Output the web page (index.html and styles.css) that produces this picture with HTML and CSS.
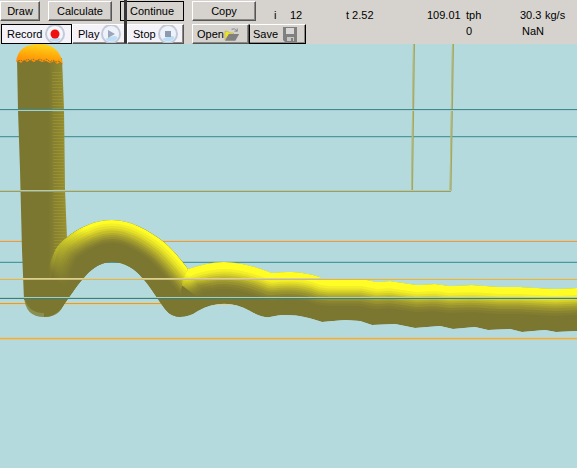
FILE: index.html
```html
<!DOCTYPE html>
<html lang="en">
<head>
<meta charset="utf-8">
<title>Trajectory</title>
<link rel="stylesheet" href="styles.css">
</head>
<body>
<header class="toolbar">
  <div class="row row-main">
    <button class="btn draw">Draw</button>
    <button class="btn">Calculate</button>
    <button class="btn focused">Continue</button>
    <button class="btn">Copy</button>
    <div class="readout readout-main">
      <span>i</span><span>12</span><span>t 2.52</span><span>109.01</span><span>tph</span><span>30.3</span><span>kg/s</span>
    </div>
  </div>
  <div class="row row-media">
    <button class="btn media selected">Record
      <svg class="round" viewBox="0 0 22 18"><circle cx="11" cy="9" r="10" fill="#c3c9d6"/><circle cx="11" cy="9" r="8" fill="#f4f6fc"/><path d="M5 14Q11 19 17 14Q15 11 5 14" fill="#b9def5"/><circle cx="11" cy="9" r="4.500" fill="#f01010"/></svg>
    </button>
    <button class="btn media play">Play
      <svg class="round" viewBox="0 0 22 18"><circle cx="11" cy="9" r="10" fill="#c3c9d6"/><circle cx="11" cy="9" r="8" fill="#eef3fb"/><path d="M5 14Q11 19 17 14Q19 8 5 14" fill="#b9def5"/><path d="M8 5L15 9L8 13Z" fill="#9ba6ba"/></svg>
    </button>
    <button class="btn media stop">Stop
      <svg class="round" viewBox="0 0 22 18"><circle cx="11" cy="9" r="10" fill="#c3c9d6"/><circle cx="11" cy="9" r="8" fill="#eef3fb"/><path d="M5 14Q11 19 17 14Q19 8 5 14" fill="#b9def5"/><rect x="8" y="6" width="6" height="6" fill="#8e9ab0"/></svg>
    </button>
    <button class="btn file open">Open
      <svg class="folder" viewBox="0 0 17 15"><path d="M1 13V4H4L6 6H10V8H5L1 13" fill="#f2e420" stroke="#a6a04a" stroke-width=".5"/><path d="M1 14L5 7H16L12 14Z" fill="#808080"/><path d="M8 2Q11 0 14 4M14 1V4H11" fill="none" stroke="#858585"/></svg>
    </button>
    <button class="btn file save">Save
      <svg class="disk" viewBox="0 0 14 15"><path d="M0 0H14V15H2L0 13Z" fill="#808080"/><path d="M3 1H11V7H3Z" fill="#dad8d6"/><path d="M4 10H11V14H4Z" fill="#c8c6c4"/><path d="M8 11H10V14H8Z" fill="#808080"/></svg>
    </button>
    <div class="readout readout-sub"><span>0</span><span>NaN</span></div>
  </div>
  <div class="cursor-bar"></div>
</header>
<main>
<svg class="plot" viewBox="0 44 577 424" role="img" aria-label="Particle trajectory">
  <defs>
    <linearGradient id="column" x1="0" x2="1" y1="0" y2="0">
      <stop offset="0" stop-color="#7b7730"/><stop offset=".62" stop-color="#7b7730"/><stop offset="1" stop-color="#989032"/>
    </linearGradient>
    <linearGradient id="cap" x1="0" x2=".25" y1="1" y2="0">
      <stop offset="0" stop-color="#ff7a08"/><stop offset=".5" stop-color="#ffa508"/><stop offset="1" stop-color="#ffd018"/>
    </linearGradient>
    <linearGradient id="fadeIn" gradientUnits="userSpaceOnUse" x1="44" y1="262" x2="88" y2="232">
      <stop offset="0" stop-color="#000"/><stop offset=".35" stop-color="#666"/><stop offset="1" stop-color="#fff"/>
    </linearGradient>
    <mask id="archFade" maskUnits="userSpaceOnUse" x="0" y="200" width="220" height="130"><rect y="200" width="220" height="130" fill="url(#fadeIn)"/></mask>
    <pattern id="ribs" width="4" height="3" patternUnits="userSpaceOnUse"><rect width="4" height="1" fill="#aaa030" opacity=".45"/></pattern>
    <path id="arch1" d="M44 290C50 261 54 246 66 238C80 227 95 220 112 220C130 220 149 230 165 243C175 252 182 261 190 270L200 282"/>
    <path id="tail" d="M178 282L188 269C200 265 212 262 224 262C240 262 257 267 272 273C289 271 307 272 322 278L330 279H362L377 282L390 281L417 285L435 284L450 286L472 285L500 287H520L555 289L577 288H620"/>
    <clipPath id="archClip"><path d="M44 300C47 264 54 246 66 238C80 227 95 220 112 220C130 220 149 230 165 243C175 252 182 261 188 269L183 285L181 317Q171 317 165 309C151 290 138 262 112 262C91 262 79 284 65 303Q57 317 44 317Z"/></clipPath>
    <clipPath id="tailClip"><path id="tailBody" d="M179 317L181 290Q183 276 188 269C200 265 212 262 224 262C240 262 257 267 272 273C289 271 307 272 322 278L330 279H362L377 282L390 281L417 285L435 284L450 286L472 285L500 287H520L555 289L577 288V331L556 332L545 330L522 332L510 329L488 330L475 327L453 329L440 326L415 328L395 324L372 325L360 321L345 320L322 322C308 317 288 312 270 317Q262 318 250 311C232 301 215 302 198 311Q190 317 179 317Z"/></clipPath>
    <linearGradient id="tailFadeIn" gradientUnits="userSpaceOnUse" x1="184" y1="297" x2="192" y2="276">
      <stop offset="0" stop-color="#000"/><stop offset="1" stop-color="#fff"/>
    </linearGradient>
    <mask id="tailFade" maskUnits="userSpaceOnUse" x="170" y="250" width="410" height="90"><rect x="210" y="250" width="370" height="90" fill="#fff"/><rect x="170" y="250" width="41" height="90" fill="url(#tailFadeIn)"/></mask>
  </defs>
  <rect y="44" width="577" height="424" fill="#b4dadd"/>
  <g fill="none">
    <path d="M0 136.500H577M0 262.500H577" stroke="#4c999d"/>
    <path d="M0 137.500H577M0 261.500H577" stroke="#9acace"/>
    <path d="M0 240.500H577" stroke="#e2c69c"/>
    <path d="M0 241.500H577" stroke="#cba463"/>
    <path d="M0 302.500H577" stroke="#e2ce98"/>
    <path d="M0 303.500H577" stroke="#c9a450"/>
    <path d="M0 304.500H577" stroke="#d9cfa0"/>
    <path d="M0 338.500H577" stroke="#e1b34d"/>
    <path d="M0 339.500H577" stroke="#dfc58b"/>
    <path d="M0 337.500H577" stroke="#d3cda8"/>
    <path d="M414 44L412 190M453 44L450.500 191" stroke="#9ea567" stroke-width="2"/>
    <path d="M413.500 44L411.500 190M452.500 44L450 191" stroke="#c3c983" stroke-width=".7"/>
  </g>
  <path d="M24 296H65Q64 317 44 317Q25 317 24 296" fill="#87904f"/>
  <path d="M24 296H65Q63 312 44 313Q27 313 24 296" fill="#7b7730"/>
  <path d="M17 58H62L64 110L65 190L67 239L65 300H24L22 250L20 170L18 110Z" fill="url(#column)"/>
  <path d="M52 70H63L64 110L65 190L66 235L54 255Z" fill="url(#ribs)"/>
  <path d="M16 62Q18 44 39 44Q60 44 63 65L60 62L57 64L54 61L50 63L46 61L42 62L38 60L34 62L30 60L27 62L24 60L21 63L18 61Z" fill="url(#cap)"/>
  <path d="M18 61L21 60L23 62L28 59L30 61L33 59L36 61L40 59L43 61L47 59L50 62L53 60L56 62L59 61L62 64" fill="none" stroke="#8c7430" stroke-dasharray="2 1"/>
  <g clip-path="url(#archClip)" fill="none">
    <path d="M64 225H200V320H40Z" fill="#7b7730"/>
    <rect x="60" y="215" width="140" height="105" fill="#7b7730"/>
    <g class="glow" mask="url(#archFade)">
      <use href="#arch1" stroke="#817c30" stroke-width="46"/><use href="#arch1" stroke="#8a8430" stroke-width="42"/>
      <use href="#arch1" stroke="#979130" stroke-width="38"/><use href="#arch1" stroke="#a49d2f" stroke-width="34"/>
      <use href="#arch1" stroke="#b3ad2d" stroke-width="30"/><use href="#arch1" stroke="#c4be2b" stroke-width="26"/>
      <use href="#arch1" stroke="#d6d02a" stroke-width="21"/><use href="#arch1" stroke="#e6e128" stroke-width="17"/>
      <use href="#arch1" stroke="#f3ef28" stroke-width="12"/><use href="#arch1" stroke="#fffd25" stroke-width="7"/>
    </g>
  </g>
  <g clip-path="url(#tailClip)" fill="none">
    <use href="#tailBody" fill="#7b7730"/>
    <g class="glow" mask="url(#tailFade)">
      <use href="#tail" stroke="#817c30" stroke-width="54"/><use href="#tail" stroke="#8a8430" stroke-width="49"/>
      <use href="#tail" stroke="#979130" stroke-width="44"/><use href="#tail" stroke="#a49d2f" stroke-width="39"/>
      <use href="#tail" stroke="#b3ad2d" stroke-width="35"/><use href="#tail" stroke="#c4be2b" stroke-width="31"/>
      <use href="#tail" stroke="#d6d02a" stroke-width="27"/><use href="#tail" stroke="#e6e128" stroke-width="23"/>
      <use href="#tail" stroke="#f3ef28" stroke-width="19"/><use href="#tail" stroke="#fffd25" stroke-width="14"/>
    </g>
  </g>
  <g fill="none">
    <path d="M0 109.500H577" stroke="#42898d"/>
    <path d="M0 110.500H577" stroke="#a5d0d2"/>
    <path d="M0 190.500H451" stroke="#bdc99d"/>
    <path d="M0 191.500H451" stroke="#8fa078"/>
    <path d="M0 278.500H577" stroke="#ddcf91"/>
    <path d="M0 279.500H577" stroke="#c7bb75"/>
    <path d="M0 297.500H577" stroke="#a8cfbd"/>
    <path d="M0 298.500H577" stroke="#37807d"/>
  </g>
</svg>
</main>
</body>
</html>
```
FILE: styles.css
```css
* { box-sizing: border-box; }
body {
  margin: 0;
  background: #b4dadd;
  color: #000;
  font: 11px/14px "Liberation Sans", Arial, sans-serif;
}
.toolbar {
  position: relative;
  display: flex;
  flex-direction: column;
  gap: 2px;
  padding-top: 1px;
  background: #d6d3ce;
}
.row { display: flex; }
.row-main { gap: 8px; }
.btn {
  width: 64px;
  height: 20px;
  padding: 0;
  color: #000;
  background: #d6d3ce;
  border: 1px solid;
  border-color: #fff #555 #555 #fff;
  box-shadow: inset -1px -1px #8b8984;
  font: inherit;
  white-space: nowrap;
}
.draw { width: 40px; }
.focused { border-color: #000; box-shadow: none; }
.media, .file {
  display: flex;
  align-items: center;
  justify-content: space-between;
  padding-left: 5px;
}
.media { background: #f4f3fa; padding-right: 5px; }
.selected { width: 71px; margin-left: 1px; border-color: #000; box-shadow: none; }
.play { width: 55px; padding-right: 4px; }
.stop { width: 57px; padding-right: 4px; }
.open { width: 57px; margin-left: 8px; padding-left: 4px; }
.save { width: 57px; padding-left: 3px; border-color: #fff #000 #000 #000; }
.file { padding-right: 8px; }
.round { width: 22px; height: 18px; }
.folder { width: 17px; height: 15px; }
.disk { width: 14px; height: 15px; }
.readout { display: grid; white-space: pre; }
.readout-main {
  grid-template-columns: 16px 56px 81px 39px 54px 25px auto;
  margin-left: 10px;
  padding-top: 7px;
}
.readout-sub {
  grid-template-columns: 56px auto;
  margin-left: 160px;
}
.cursor-bar {
  position: absolute;
  top: 0;
  left: 124px;
  width: 3px;
  height: 43px;
  background: #343438;
}
.plot { display: block; width: 100%; height: auto; }
.glow { stroke-linejoin: round; }
```
